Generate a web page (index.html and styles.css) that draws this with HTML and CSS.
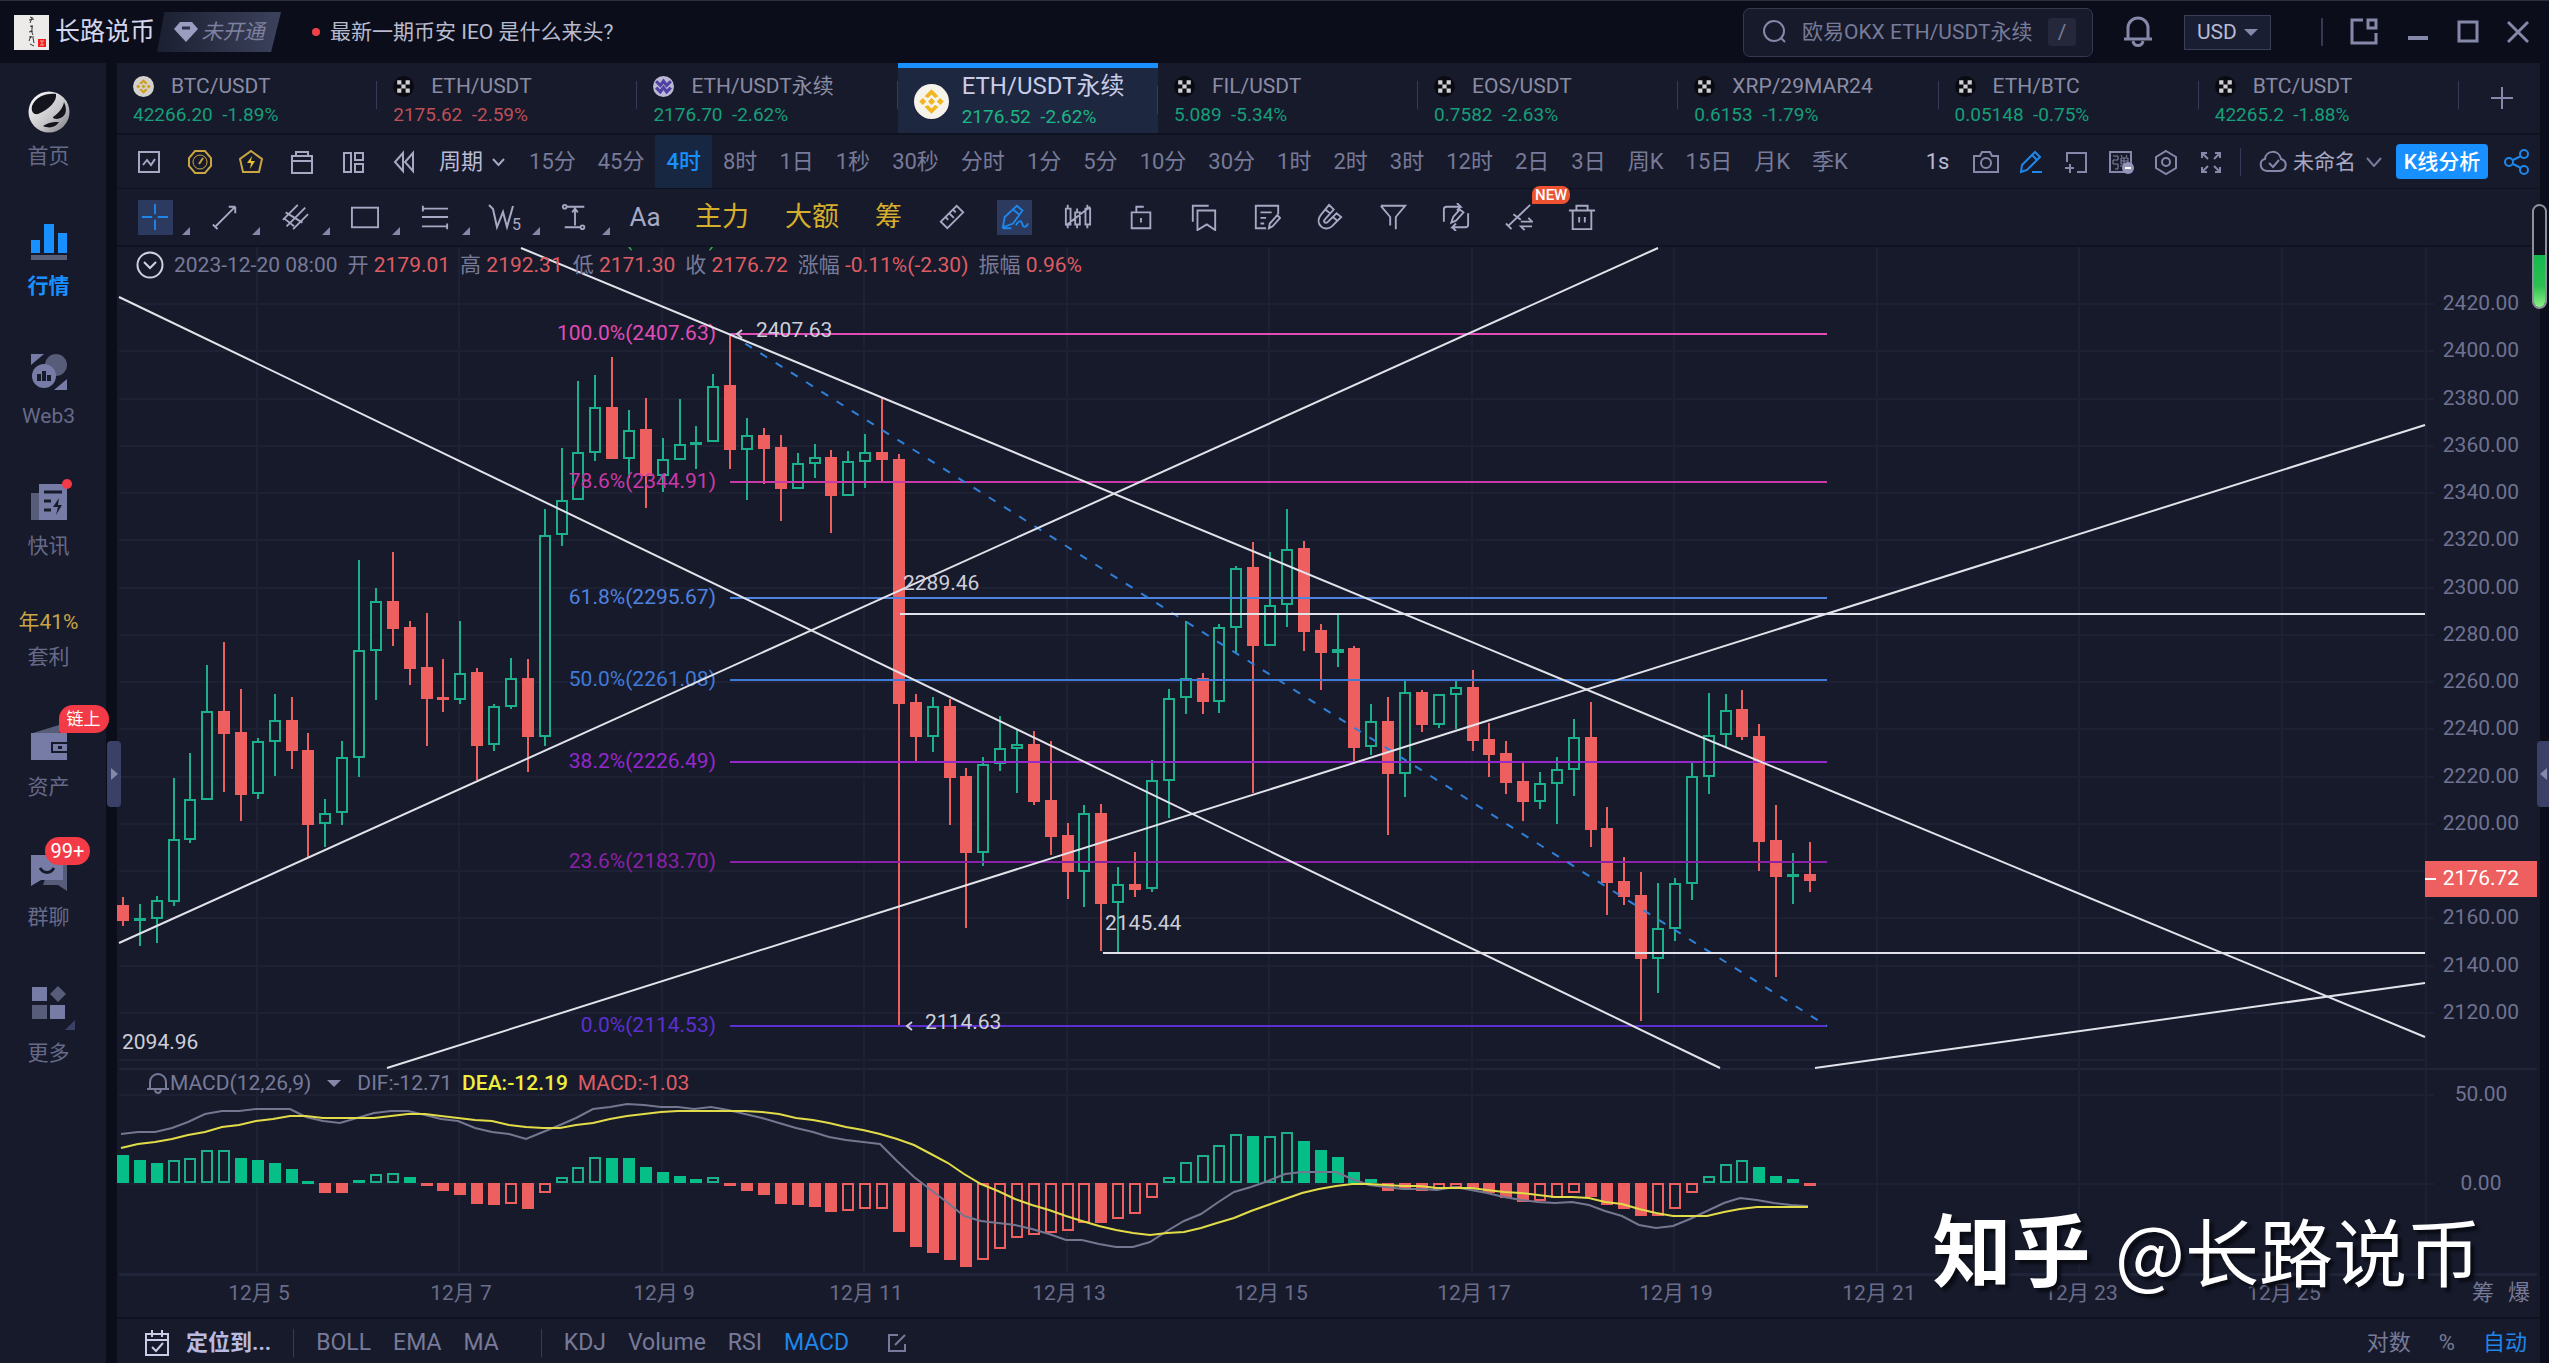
FILE: index.html
```html
<!DOCTYPE html>
<html lang="zh-CN">
<head>
<meta charset="utf-8">
<title>ETH/USDT永续</title>
<link rel="stylesheet" href="styles.css">
</head>
<body>
<header class="topbar">
  <svg class="avatar" viewBox="0 0 35 35" aria-hidden="true"><rect width="35" height="35" fill="#ecebea"/><path d="M16 2l3 1M15 5l5-1M18 3l-2 5M16 11l3 1M18 10v5M15 17l4-1M17 15l2 5M15 22h5M17 21l-2 5M19 23l1 5M16 29l4 2" stroke="#333" fill="none"/><rect x="24" y="24" width="8" height="8" fill="#ee2020"/><path d="M26 26h4M28 26v4M26 30h4" stroke="#f9a09a"/></svg>
  <strong class="username">长路说币</strong>
  <button class="vip"><svg width="24" height="22" viewBox="0 0 24 22"><path d="M6 1h12l6 7-12 13L0 8z" fill="#9a9dc0"/><path d="M8 7h8" stroke="#2b2f48" stroke-width="3"/></svg><span>未开通</span></button>
  <a class="news" href="#"><i class="dot"></i>最新一期币安 IEO 是什么来头?</a>
  <label class="search">
    <svg width="26" height="26" viewBox="0 0 26 26" fill="none" stroke="#8588a8" stroke-width="2"><circle cx="12" cy="12" r="10"/><path d="M19 19l4 4"/></svg>
    <input type="text" aria-label="搜索" value="欧易OKX ETH/USDT永续">
    <kbd>/</kbd>
  </label>
  <button class="bell" aria-label="通知"><svg width="30" height="32" viewBox="0 0 30 32" fill="none" stroke="#8588a8" stroke-width="3"><path d="M5 22V12a10 10 0 0 1 20 0v10M1 23h28M10 25c1 6 9 6 10 0"/></svg></button>
  <span class="currency"><select aria-label="货币"><option>USD</option></select></span>
  <span class="win-controls">
    <button aria-label="布局"><svg width="30" height="28" viewBox="0 0 30 28" fill="none" stroke="#8588a8" stroke-width="3"><path d="M14 2H3v23h24V15"/><rect x="19" y="2" width="8" height="8"/></svg></button>
    <button aria-label="最小化"><svg width="22" height="28" viewBox="0 0 22 28"><path d="M1 20h20" stroke="#8588a8" stroke-width="4"/></svg></button>
    <button aria-label="最大化"><svg width="22" height="28" viewBox="0 0 22 28"><rect x="2" y="4" width="18" height="19" fill="none" stroke="#8588a8" stroke-width="3"/></svg></button>
    <button aria-label="关闭"><svg width="22" height="28" viewBox="0 0 22 28"><path d="M1 4l20 20M21 4L1 24" stroke="#8588a8" stroke-width="3"/></svg></button>
  </span>
</header>

<div class="workspace">
  <nav class="sidebar">
    <a href="#" class="nav-item"><span class="nav-icon"><svg width="42" height="42" viewBox="0 0 42 42"><defs><linearGradient id="silver" x1="0" y1="0" x2="1" y2="1"><stop offset="0" stop-color="#fff"/><stop offset=".6" stop-color="#c4c4c8"/><stop offset="1" stop-color="#77777c"/></linearGradient></defs><circle cx="21" cy="21" r="20.500" fill="url(#silver)"/><path d="M4 15C8 6 17 2 28 3 29 10 22 18 10 23 5 24 3 20 4 15zM36 11c4 8 2 16-7 17-3 0-4-1-4-2 6-4 10-9 11-15zM15 35c6-4 11-4 16-4-3 5-9 7-16 4z" fill="#14141c"/></svg></span><span>首页</span></a>
    <a href="#" class="nav-item active"><span class="nav-icon"><svg width="36" height="38" viewBox="0 0 36 38"><path d="M0 17h9v13H0zM13 1h10v29H13zM27 10h9v20h-9z" fill="#1890ff"/><path d="M0 32h36v5H0z" fill="#5a6078"/></svg></span><span>行情</span></a>
    <a href="#" class="nav-item"><span class="nav-icon"><svg width="36" height="36" viewBox="0 0 36 36"><circle cx="25" cy="11" r="11" fill="#575c78"/><path d="M0 0h13L0 11zM36 36H23L36 25z" fill="#777ca6"/><circle cx="13" cy="22" r="12" fill="#777ca6"/><path d="M6 20h4v7H6zM11 17h4v10h-4zM16 21h4v6h-4z" fill="#171a2b"/></svg></span><span>Web3</span></a>
    <a href="#" class="nav-item"><span class="nav-icon"><svg class="spill" width="36" height="38" viewBox="0 0 36 38"><path d="M0 10h8v27H0z" fill="#575c78"/><path d="M8 1h28v36H8z" fill="#777ca6"/><path d="M13 9h18M13 18h7M13 27h7" stroke="#171a2b" stroke-width="3"/><path d="M28 15l-6 9h5l-2 8 6-10h-4z" fill="#171a2b"/><circle cx="36" cy="1" r="5" fill="#f23b46"/></svg></span><span>快讯</span></a>
    <a href="#" class="nav-item promo"><em>年41%</em><span>套利</span></a>
    <a href="#" class="nav-item"><span class="nav-icon"><svg width="36" height="36" viewBox="0 0 36 36"><path d="M2 8L28 0v8z" fill="#575c78"/><path d="M0 8h36v9H20v11h16v7H0z" fill="#777ca6"/><path d="M22 19h14v7H22z" fill="#777ca6"/><path d="M27 21h4v3h-4z" fill="#171a2b"/></svg><b class="badge chain">链上</b></span><span>资产</span></a>
    <a href="#" class="nav-item"><span class="nav-icon"><svg width="36" height="36" viewBox="0 0 36 36"><path d="M20 8h16v28l-9-6H12z" fill="#575c78"/><path d="M0 0h32v25H10L0 31z" fill="#777ca6"/><path d="M9 13c4 6 10 6 14 0" fill="none" stroke="#171a2b" stroke-width="3"/></svg><b class="badge count">99+</b></span><span>群聊</span></a>
    <a href="#" class="nav-item more"><span class="nav-icon"><svg width="34" height="34" viewBox="0 0 34 34"><path d="M0 1h15v14H0zM18 19h15v14H18z" fill="#777ca6"/><path d="M0 19h15v14H0zM26 0l8 8-8 8-8-8z" fill="#575c78"/></svg><i class="corner"></i></span><span>更多</span></a>
  </nav>

  <main class="panel">
    <div class="tabs">
      <button class="tab"><svg class="coin" viewBox="0 0 20 20"><use href="#bnb"/></svg><span class="pair">BTC/USDT</span><span class="quote up">42266.20&nbsp; -1.89%</span></button>
      <button class="tab"><svg class="coin" viewBox="0 0 20 20"><use href="#okx"/></svg><span class="pair">ETH/USDT</span><span class="quote down">2175.62&nbsp; -2.59%</span></button>
      <button class="tab"><svg class="coin" viewBox="0 0 20 20"><circle cx="10" cy="10" r="10" fill="#d8d4f4"/><path d="M3 5l4 4 3-4 3 4 4-4M3 11l4 4 3-4 3 4 4-4" fill="none" stroke="#5a48b8" stroke-width="3"/></svg><span class="pair">ETH/USDT永续</span><span class="quote up">2176.70&nbsp; -2.62%</span></button>
      <button class="tab current"><svg class="coin" viewBox="0 0 20 20"><use href="#bnb"/></svg><span class="pair">ETH/USDT永续</span><span class="quote up">2176.52&nbsp; -2.62%</span></button>
      <button class="tab"><svg class="coin" viewBox="0 0 20 20"><use href="#okx"/></svg><span class="pair">FIL/USDT</span><span class="quote up">5.089&nbsp; -5.34%</span></button>
      <button class="tab"><svg class="coin" viewBox="0 0 20 20"><use href="#okx"/></svg><span class="pair">EOS/USDT</span><span class="quote up">0.7582&nbsp; -2.63%</span></button>
      <button class="tab"><svg class="coin" viewBox="0 0 20 20"><use href="#okx"/></svg><span class="pair">XRP/29MAR24</span><span class="quote up">0.6153&nbsp; -1.79%</span></button>
      <button class="tab"><svg class="coin" viewBox="0 0 20 20"><use href="#okx"/></svg><span class="pair">ETH/BTC</span><span class="quote up">0.05148&nbsp; -0.75%</span></button>
      <button class="tab"><svg class="coin" viewBox="0 0 20 20"><use href="#okx"/></svg><span class="pair">BTC/USDT</span><span class="quote up">42265.2&nbsp; -1.88%</span></button>
      <button class="add-tab" aria-label="添加"><svg width="24" height="24" viewBox="0 0 24 24"><path d="M12 1v22M1 12h22" stroke="#8588a8" stroke-width="2"/></svg></button>
    </div>

    <div class="periods">
      <button class="ic" aria-label="图表"><svg viewBox="0 0 28 28"><rect x="4" y="4" width="20" height="20"/><path d="M8 17l4-5 4 5 4-6"/></svg></button>
      <button class="ic gold" aria-label="仪表"><svg viewBox="0 0 28 28"><path d="M9 3h10l6 7v8l-6 7H9l-6-7v-8z"/><circle cx="14" cy="14" r="7" stroke-width="1"/><path d="M13 16l4-6"/></svg></button>
      <button class="ic gold" aria-label="闪电"><svg viewBox="0 0 28 28"><path d="M14 3l11 8-3 13H6L3 11z"/><path d="M15 8l-5 7h4l-1 6 5-8h-4z" fill="#e8c02c" stroke="none"/></svg></button>
      <button class="ic" aria-label="仓位"><svg viewBox="0 0 28 28"><path d="M8 8V4h12v4M4 8h20v5H4zM4 13v12h20V13"/></svg></button>
      <button class="ic" aria-label="多图"><svg viewBox="0 0 28 28"><path d="M5 5h7v19H5zM16 5h8v7h-8zM16 16h8v8h-8z"/></svg></button>
      <button class="ic" aria-label="回放"><svg viewBox="0 0 28 28"><path d="M13 5v18L5 14zM23 5v18l-8-9z"/></svg></button>
      <button class="menu">周期<svg width="15" height="10" viewBox="0 0 15 10"><path d="M2 2l5.500 6L13 2"/></svg></button>
      <button class="p">15分</button><button class="p">45分</button><button class="p on">4时</button><button class="p">8时</button><button class="p">1日</button><button class="p">1秒</button><button class="p">30秒</button><button class="p">分时</button><button class="p">1分</button><button class="p">5分</button><button class="p">10分</button><button class="p">30分</button><button class="p">1时</button><button class="p">2时</button><button class="p">3时</button><button class="p">12时</button><button class="p">2日</button><button class="p">3日</button><button class="p">周K</button><button class="p">15日</button><button class="p">月K</button><button class="p">季K</button>
      <div class="actions">
        <button class="sec">1s</button>
        <button class="ic dim" aria-label="截图"><svg viewBox="0 0 28 28"><path d="M2 8h6l2-4h8l2 4h6v16H2z"/><circle cx="14" cy="15" r="5"/></svg></button>
        <button class="ic blue" aria-label="画笔"><svg viewBox="0 0 28 28"><path d="M4 24l1-7L18 4l5 5L10 22zM15 24h10M15 7l5 5"/></svg></button>
        <button class="ic dim" aria-label="添加指标"><svg viewBox="0 0 28 28"><path d="M5 14V5h19v19h-9M3 20h9M8 16v9"/></svg></button>
        <button class="ic dim" aria-label="弹幕"><svg viewBox="0 0 28 28"><rect x="3" y="4" width="21" height="20"/><path d="M6 8h5v4H6v4h5v5H8M14 7l1 2M20 7l-1 2M14 10h7v6h-7zM14 13h7M17 10v11M13 18h9" stroke-width="1"/><circle cx="21" cy="20" r="6" fill="#9396b8" stroke="none"/><path d="M18 20h6" stroke="#fff"/></svg></button>
        <button class="ic dim" aria-label="设置"><svg viewBox="0 0 28 28"><path d="M14 3l10 6v11l-10 6-10-6V9z"/><circle cx="14" cy="14" r="4"/></svg></button>
        <button class="ic dim" aria-label="全屏"><svg viewBox="0 0 28 28"><path d="M10 5H5v5M5 5l6 6M18 5h5v5M23 5l-6 6M10 24H5v-5M5 24l6-6M18 24h5v-5M23 24l-6-6"/></svg></button>
        <span class="vline"></span>
        <button class="layout"><svg width="28" height="24" viewBox="0 0 28 24"><path d="M8 21c-8-1-8-11-2-12C7 0 20-1 22 9c7 2 6 12-2 12zM10 13l4 4 6-7" stroke="#8588a8"/></svg>未命名<svg class="chev" width="16" height="10" viewBox="0 0 16 10"><path d="M1 1l7 8 7-8" stroke="#777a98"/></svg></button>
        <button class="analyse">K线分析</button>
        <button class="share" aria-label="分享"><svg width="28" height="28" viewBox="0 0 28 28"><circle cx="6" cy="14" r="4"/><circle cx="21" cy="6" r="4"/><circle cx="21" cy="22" r="4"/><path d="M10 12l8-4M10 16l8 4"/></svg></button>
      </div>
    </div>

    <div class="tools">
      <button class="tool sub" aria-label="十字"><span class="lit"><svg viewBox="0 0 30 30"><path d="M15 1v11M15 18v11M1 15h11M18 15h11"/></svg></span></button>
      <button class="tool sub" aria-label="线段"><svg viewBox="0 0 30 30"><path d="M4 26L25 5M19 4l7 0M26 4v7M2 23l5 5"/></svg></button>
      <button class="tool sub" aria-label="平行线"><svg viewBox="0 0 30 30"><path d="M2 18L18 2M6 25L26 5M13 28L29 12M5 10l18 11M4 17l10 8" /></svg></button>
      <button class="tool sub" aria-label="矩形"><svg viewBox="0 0 30 30"><rect x="1" y="5" width="28" height="21"/></svg></button>
      <button class="tool sub" aria-label="斐波那契"><svg viewBox="0 0 30 30"><path d="M1 6h28M1 15h28M1 25h28M2 3v6M28 22v6"/></svg></button>
      <button class="tool sub" aria-label="波浪"><svg class="wave" viewBox="0 0 34 30"><path d="M1 3l4 4 4 18 6-15 4 15 6-21" /><text x="24" y="28" class="five">5</text></svg></button>
      <button class="tool sub" aria-label="测量"><svg viewBox="0 0 30 30"><path d="M6 4h19M4 26h17M15 8v16M12 10l3-4 3 4"/><circle cx="4" cy="4" r="2"/><circle cx="23" cy="26" r="2"/></svg></button>
      <button class="tool aa">Aa</button>
      <button class="word">主力</button><button class="word">大额</button><button class="word">筹</button>
      <button class="tool slim" aria-label="尺子"><svg viewBox="0 0 30 30"><path d="M3 20L20 3l7 7L10 27zM8 15l3 3M12 11l5 5M16 7l3 3"/></svg></button>
      <button class="tool slim" aria-label="画线"><span class="lit"><svg viewBox="0 0 30 30"><path d="M2 26l2-11L17 3l6 5L13 22zM2 27h9M13 7l6 5M16 24c4-7 6-5 7-1s4 3 6-1"/></svg></span></button>
      <button class="tool slim" aria-label="K线"><svg viewBox="0 0 30 30"><path d="M2 6h5v17H2zM12 10h5v13h-5zM23 6h5v17h-5zM4 2v4M4 23v4M14 6v4M14 23v4M25 2v4M25 23v4M2 24L28 4"/></svg></button>
      <button class="tool slim" aria-label="锁"><svg viewBox="0 0 30 30"><path d="M5 10h20v17H5zM10 10V4h8M15 16v5"/></svg></button>
      <button class="tool slim" aria-label="书签"><svg viewBox="0 0 30 30"><path d="M8 8h19v21l-9-6-10 6zM3 20V3h17"/></svg></button>
      <button class="tool slim" aria-label="笔记"><svg viewBox="0 0 30 30"><path d="M27 12V3H3v24h11M8 10h12M8 16h6M8 22h4M17 27l1-5 8-9 3 3-8 9z"/></svg></button>
      <button class="tool slim" aria-label="磁铁"><svg viewBox="0 0 30 30"><path d="M14 2L5 13c-7 9 4 19 12 12l10-10-5-4-9 9c-3 3-6 0-3-3l9-10zM10 7l5 4M18 15l5 4"/></svg></button>
      <button class="tool slim" aria-label="筛选"><svg viewBox="0 0 30 30"><path d="M2 3h26L18 15v13M2 3l10 12v9"/></svg></button>
      <button class="tool slim" aria-label="同步"><svg viewBox="0 0 30 30"><path d="M2 20V7q0-3 3-3h15l-4-4M20 4l-4 4M28 11v12q0 3-3 3H11l4-4M11 26l4 4M10 21l2-6 7-8 4 3-8 9z"/></svg></button>
      <button class="tool slim" aria-label="对比"><svg viewBox="0 0 30 30"><path d="M3 25L27 2M1 22l6 6M9 12l8 6M17 20h12l-4-4M29 25H17l4 4"/></svg><b class="new">NEW</b></button>
      <button class="tool slim" aria-label="删除"><svg viewBox="0 0 30 30"><path d="M1 8h28M5 8v20h20V8M9 8V3h12v5M12 15v6M18 15v6"/></svg></button>
    </div>

    <section class="chart">
      <svg id="plot"></svg>
      <div class="legend ohlc">
        <button class="fold" aria-label="收起"><svg width="28" height="28" viewBox="0 0 28 28"><circle cx="14" cy="14" r="12.500"/><path d="M8 11l6 6 6-6"/></svg></button>
        <span>2023-12-20 08:00</span>
        <span>开 <b>2179.01</b></span><span>高 <b>2192.31</b></span><span>低 <b>2171.30</b></span><span>收 <b>2176.72</b></span><span>涨幅 <b>-0.11%(-2.30)</b></span><span>振幅 <b>0.96%</b></span>
      </div>
      <div class="legend macd">
        <span class="ind"><svg width="24" height="24" viewBox="0 0 24 24"><path d="M4 17V11a8 8 0 0 1 16 0v6M1 18h22M9 19c1 4 5 4 6 0"/></svg>MACD(12,26,9)</span><i class="tri"></i>
        <span>DIF:-12.71</span><span class="dea">DEA:-12.19</span><b>MACD:-1.03</b>
      </div>
      <div class="legend extra"><button>筹</button><button>爆</button></div>
    </section>

    <footer class="indicators">
      <button class="locate"><svg width="26" height="28" viewBox="0 0 26 28"><path d="M2 5h22v21H2zM2 11h22M8 1v7M18 1v7M8 18l4 4 7-8"/></svg><strong>定位到...</strong></button>
      <span class="vline"></span>
      <button>BOLL</button><button>EMA</button><button>MA</button>
      <span class="vline wide"></span>
      <button>KDJ</button><button>Volume</button><button>RSI</button><button class="on">MACD</button>
      <button class="edit" aria-label="编辑"><svg width="20" height="20" viewBox="0 0 20 20"><path d="M11 2H2v16h16v-7M8 12L18 2"/></svg></button>
      <span class="scale"><button>对数</button><button>%</button><button class="on">自动</button></span>
    </footer>
  </main>
  <button class="handle left" aria-label="展开左侧"></button>
  <button class="handle right" aria-label="展开右侧"></button>
  <div class="gauge"><i></i></div>
  <div class="watermark"><b>知乎</b> @长路说币</div>
</div>

<svg width="0" height="0" class="defs" aria-hidden="true">
  <symbol id="bnb" viewBox="0 0 20 20"><circle cx="10" cy="10" r="10" fill="#f6f3ea"/><path d="M10 3l4 4-2 1-2-2-2 2-2-1zM10 17l4-4-2-1-2 2-2-2-2 1zM3 10l2-2 2 2-2 2zM17 10l-2-2-2 2 2 2zM10 8l2 2-2 2-2-2z" fill="#f0b622"/></symbol>
  <symbol id="okx" viewBox="0 0 20 20"><circle cx="10" cy="10" r="10" fill="#08090e"/><path d="M4 4h4v4H4zM12 4h4v4h-4zM8 8h4v4H8zM4 12h4v4H4zM12 12h4v4h-4z" fill="#f0f0f0"/></symbol>
</svg>
<script src="chart.js"></script>
</body>
</html>
```
FILE: styles.css
```css
* { box-sizing: border-box; }
body {
  margin: 0;
  height: 100vh;
  display: flex;
  flex-direction: column;
  overflow: hidden;
  background: #0b0e1a;
  color: #777a98;
  font: 21px/28px Roboto, "Noto Sans CJK SC", sans-serif;
}
button, input, select { font: inherit; color: inherit; background: none; border: 0; padding: 0; margin: 0; }
button { cursor: pointer; display: flex; align-items: center; justify-content: center; white-space: nowrap; }
a { color: inherit; text-decoration: none; }
svg { flex: none; display: block; }
.defs { position: absolute; }

.topbar {
  height: 63px;
  flex: none;
  display: flex;
  align-items: center;
  padding: 0 20px 0 14px;
  border-top: 1px solid #2b3040;
}
.avatar { width: 35px; height: 35px; }
.username { margin-left: 6px; font-size: 25px; font-weight: 400; color: #d3d6ee; }
.vip {
  margin-left: 2px;
  width: 124px;
  height: 40px;
  gap: 4px;
  color: #7d819f;
  font-style: italic;
  background: linear-gradient(90deg, #1b1f31, #3c425c);
  clip-path: polygon(6% 0, 100% 0, 92% 100%, 0 100%);
}
.news { display: flex; align-items: center; gap: 10px; margin-left: 31px; color: #b9bbcf; }
.dot { width: 8px; height: 8px; border-radius: 50%; background: #f2404a; }
.search {
  margin-left: auto;
  width: 350px;
  height: 49px;
  display: flex;
  align-items: center;
  padding: 0 16px 0 18px;
  border: 1px solid #343950;
  border-radius: 7px;
  background: #171a2b;
}
.search input { flex: 1; min-width: 0; margin-left: 14px; color: #777a98; outline: 0; }
.search kbd { width: 28px; height: 28px; text-align: center; font: inherit; background: #24283a; border-radius: 3px; }
.bell { margin-left: 30px; }
.currency { position: relative; margin-left: 31px; }
.currency select {
  appearance: none;
  width: 87px;
  height: 35px;
  padding-left: 12px;
  border: 1px solid #3a3f58;
  background: #1a1e32;
  color: #b9bbd4;
}
.currency::after {
  content: "";
  position: absolute;
  right: 13px;
  top: 14px;
  border: 7px solid transparent;
  border-top-color: #8588a8;
  border-bottom: 0;
}
.win-controls { display: flex; gap: 28px; margin-left: 50px; padding-left: 26px; border-left: 2px solid #343950; }

.workspace { position: relative; flex: 1; min-height: 0; display: flex; }
.sidebar {
  width: 106px;
  flex: none;
  display: flex;
  flex-direction: column;
  gap: 50px;
  padding: 28px 9px 0 0;
  background: #171a2b;
}
.nav-item { display: flex; flex-direction: column; align-items: center; gap: 8px; line-height: 30px; color: #666a88; }
.nav-item.active { color: #1890ff; font-weight: 700; }
.nav-item.promo { gap: 5px; margin-top: -4px; }
.promo em { font-style: normal; color: #c9a544; }
.nav-item.more { gap: 14px; }
.nav-icon { position: relative; height: 42px; display: flex; align-items: center; }
.spill { overflow: visible; }
.badge {
  position: absolute;
  height: 28px;
  padding: 0 8px;
  border-radius: 14px;
  background: #f23b46;
  color: #fff;
  font-size: 17px;
  font-weight: 400;
  line-height: 28px;
  white-space: nowrap;
}
.badge.chain { left: 28px; top: -17px; border-radius: 14px 14px 14px 2px; }
.badge.count { left: 14px; top: -15px; font-size: 20px; padding: 0 6px; }
.corner { position: absolute; right: -9px; bottom: -6px; border: 5px solid #3a4066; border-left-color: transparent; border-top-color: transparent; }

.panel { flex: 1; min-width: 0; margin: 0 9px 0 11px; display: flex; flex-direction: column; background: #171a2b; }
.tabs { height: 72px; flex: none; display: flex; border-bottom: 2px solid #0f1220; }
.tab {
  position: relative;
  flex: 1;
  min-width: 0;
  display: grid;
  grid-template: 28px 26px / 38px 1fr;
  align-content: start;
  padding: 9px 0 0 16px;
  row-gap: 2px;
  text-align: left;
  justify-items: start;
  justify-content: stretch;
  color: #8a8ca4;
}
.tab::after { content: ""; position: absolute; right: 0; top: 18px; height: 28px; border-right: 1px solid #343a58; }
.coin { width: 21px; height: 21px; opacity: .85; }
.quote { grid-column: 1 / 3; font-size: 19px; }
.up { color: #159f7a; }
.down { color: #bd4f58; }
.tab.current { flex: 1 0 4px; height: 70px; background: #1e2740; border-top: 5px solid #1890ff; grid-template-columns: 48px 1fr; color: #c9cce6; padding-top: 4px; row-gap: 4px; }
.current .coin { grid-row: 1 / 3; align-self: center; width: 35px; height: 35px; opacity: 1; }
.current .pair { font-size: 24px; }
.current .quote { grid-column: 2; color: #1cb584; }
.add-tab { width: 81px; padding-left: 6px; }

.periods { height: 54px; flex: none; display: flex; align-items: stretch; padding-left: 6px; font-size: 22px; border-bottom: 1px solid #0f1220; }
.periods svg { fill: none; stroke: #a7a9c4; stroke-width: 2; }
.ic { width: 51px; }
.ic svg { width: 28px; height: 28px; }
.periods .gold svg { stroke: #c9a544; }
.periods .blue svg, .periods .share svg { stroke: #1f86ea; }
.periods .dim svg { stroke: #8588a8; }
.menu { padding: 0 12px 0 10px; gap: 8px; color: #b9bbd4; }
.p { padding: 0 11px; }
.p.on { background: #172742; color: #1890ff; font-weight: 500; }
.actions { display: flex; align-items: center; margin-left: auto; padding-right: 9px; }
.actions .ic { width: 45px; }
.sec { width: 51px; color: #b9bbd4; }
.vline { width: 1px; height: 28px; background: #343a58; margin: 0 18px 0 7px; }
.layout { gap: 6px; font-size: 21px; color: #a7a9c4; }
.chev { margin-left: 4px; }
.analyse { width: 92px; height: 35px; margin: 0 15px 0 14px; border-radius: 4px; background: #1890ff; color: #fff; font-size: 21px; font-weight: 500; }

.tools { height: 58px; flex: none; display: flex; align-items: stretch; padding-left: 3px; border-bottom: 2px solid #0f1220; }
.tool { position: relative; width: 70px; }
.tool svg { width: 28px; height: 28px; fill: none; stroke: #a7a9c4; stroke-width: 2; }
.tool .wave { width: 34px; height: 30px; }
.tool.slim { width: 63px; }
.tool.sub::after { content: ""; position: absolute; right: 0; bottom: 10px; border: 4px solid #8588a8; border-left-color: transparent; border-top-color: transparent; }
.five { font-size: 16px; fill: #a7a9c4; stroke: none; }
.lit { width: 35px; height: 35px; display: flex; align-items: center; justify-content: center; background: #2c3a60; }
.tool .lit svg { stroke: #1f86ea; }
.aa { font-size: 26px; color: #a7a9c4; }
.word { padding: 0 18px; font-size: 27px; color: #d6ae2c; }
.aa + .word { padding-left: 15px; }
.new { position: absolute; left: 45px; top: -3px; height: 18px; padding: 0 3px; border-radius: 8px 8px 8px 0; background: #ee5331; color: #fff; font-size: 15px; line-height: 18px; font-weight: 500; }

.chart { position: relative; flex: 1; min-height: 0; }
#plot { position: absolute; width: 100%; height: 100%; }
#plot text { dominant-baseline: central; }
.legend { position: absolute; display: flex; align-items: center; white-space: nowrap; }
.legend b { font-weight: 400; color: #df5c63; }
.legend svg { fill: none; stroke: #777a98; stroke-width: 2; }
.ohlc { left: 19px; top: 4px; gap: 10px; }
.legend .fold svg { stroke: #cfd1e2; }
.macd { left: 29px; bottom: 220px; gap: 10px; }
.ind { display: flex; align-items: center; }
.tri { margin: 0 6px; border: 7px solid transparent; border-top-color: #8588a8; border-bottom: 0; }
.legend .dea { color: #eeee3c; font-weight: 500; }
.extra { right: 10px; bottom: 10px; gap: 14px; font-size: 22px; }

.indicators { height: 46px; flex: none; display: flex; align-items: center; gap: 22px; padding: 3px 13px 0 27px; font-size: 23px; border-top: 2px solid #0f1220; }
.indicators svg { fill: none; stroke: #777a98; stroke-width: 2; }
.indicators .locate { gap: 16px; color: #b9bbe0; font-size: 22px; }
.locate svg { stroke: #c9cce6; }
.indicators .vline { margin: 0; }
.indicators .wide { margin: 0 0 0 20px; }
.indicators .on { color: #1f86ea; }
.edit { margin-left: 16px; }
.scale { display: flex; gap: 28px; margin-left: auto; font-size: 22px; }

.handle { position: absolute; top: 678px; width: 14px; height: 66px; border-radius: 4px; background: #3a4066; }
.handle::after { content: ""; border: 6px solid transparent; border-left: 7px solid #8588a8; border-right: 0; }
.handle.left { left: 107px; }
.handle.right { right: 0; width: 12px; border-radius: 4px 0 0 4px; }
.handle.right::after { border-left: 0; border-right: 7px solid #8588a8; }
.gauge { position: absolute; right: 2px; top: 141px; width: 15px; height: 105px; display: flex; align-items: flex-end; border: 2px solid #8e909c; border-radius: 8px; background: #10131f; overflow: hidden; }
.gauge i { width: 100%; height: 52px; background: linear-gradient(#14b850, #2cc050 60%, #8ef08a); }
.watermark { position: absolute; right: 68px; bottom: 66px; font-size: 74px; line-height: 96px; color: #fff; text-shadow: 4px 4px 3px #0a0c14; white-space: nowrap; font-family: "Noto Sans CJK SC", sans-serif; }
.watermark b { font-size: 79px; margin-right: 8px; }
```
FILE: chart.js
```js
// The drawing is laid out on a 2423 x 1070 grid and scaled to the space available.
const GRID_W = 2423, GRID_H = 1070, LEFT = 117, TOP = 247;
const STEP = 16.87, FIRST = 122.9, ZERO = 1183;
const GREEN = '#1cb08a', RED = '#ee6060', PLOT_RIGHT = 2425;

// One candle per entry: direction, high, body top, body bottom, low.
const candles = `r897 905 921 926|g904 918 921 946|g896 900 919 943|g778 839 902 906|g753 799 840 843|g665 711 800 800|r642 711 734 792|r689 732 795 821|g738 741 794 799|g694 720 742 776|r697 720 751 769|r733 750 825 857|g799 813 824 847|g741 757 813 825|g560 650 758 777|g588 601 651 700|r552 601 629 646|r621 627 669 685|r613 667 699 746|r659 697 700 712|g621 673 700 704|r668 672 746 780|g704 706 745 751|g658 678 707 709|r659 678 737 772|g509 535 737 746|g448 500 535 546|g381 452 500 500|g375 407 453 461|r357 407 459 459|g410 430 459 478|r398 429 476 508|g438 459 476 492|g399 444 460 460|g426 442 444 469|g374 386 442 442|r335 385 450 469|g418 435 450 500|r428 435 449 484|r435 447 489 521|g453 463 489 489|g444 457 464 478|r450 457 496 533|g451 461 496 496|g434 452 462 488|r398 452 460 482|r454 459 704 1025|r694 702 737 763|g697 706 737 752|r699 706 778 825|r768 776 853 928|g757 764 853 866|g716 748 764 771|g729 744 749 793|r731 744 802 805|r741 800 837 855|r823 835 872 899|g805 813 872 907|r804 813 904 951|g867 884 903 953|r852 884 890 897|g760 780 889 892|g689 698 781 818|g621 678 698 714|r673 678 702 714|g624 627 702 713|g566 568 628 653|r542 567 646 793|g552 605 646 646|g509 549 605 627|r541 548 632 651|r624 630 653 690|g614 649 653 667|r646 648 748 762|g704 721 747 755|r697 721 774 835|g681 692 774 797|r690 692 725 732|g694 694 725 728|g681 687 695 729|r670 687 741 751|r723 739 755 777|r741 753 783 794|r763 781 802 821|g772 783 802 809|g757 769 784 824|g719 737 770 796|r702 737 830 847|r807 828 883 915|r857 881 897 905|r872 895 959 1021|g883 928 959 993|g878 883 929 941|g761 776 884 900|g693 735 777 794|g694 710 735 747|r690 709 737 740|r724 736 842 871|r805 840 877 977|g853 874 876 904|r842 874 881 892`.split('|');

// Histogram heights; an "h" marks a hollow bar.
const hist = '28 23 20 23h 25h 33h 33h 25 23 20 14 2 -10 -10 3 9h 10h 6 -3 -8 -12 -21 -22 -21h -26 -10h 6h 16h 26h 25 25 16 11 7 4 6h -3 -8 -12 -21 -22 -24 -29 -28h -26h -26h -49 -64 -70 -77 -84 -77h -66h -55h -52h -50h -48h -40h -40 -36h -31h -15h 6h 21h 28h 38h 49h 47 47h 51h 42 33 26 11 4 -8 -6 -8 -6h -5h -6 -10 -15 -19 -18h -15h -10h -14 -22 -26 -33 -33h -26h -10h 7h 19h 23h 16 7 4 -3'.split(' ');

// Indicator curves, in thirds of a grid unit below y = 1060.
const dif = [222,216,216,204,187,163,153,153,147,147,147,170,183,188,174,158,153,153,166,177,183,204,215,221,236,215,195,174,147,142,131,136,141,141,147,142,151,161,173,188,204,215,230,241,247,251,303,350,390,430,468,483,489,494,508,523,541,541,551,562,562,546,512,483,461,428,395,382,362,341,336,336,336,358,374,380,387,387,389,382,390,398,410,420,426,430,425,436,452,467,494,504,498,478,452,430,414,419,430,435,439];
const dea = [265,252,247,236,225,215,200,195,184,178,168,169,174,174,174,174,168,163,163,168,174,179,184,195,200,205,205,195,188,178,168,163,157,152,152,152,152,152,157,163,174,179,190,200,210,221,237,256,283,308,341,373,392,418,435,451,467,484,498,510,520,524,520,515,505,489,473,452,436,416,398,388,377,373,373,374,378,379,383,384,385,390,395,400,405,410,410,415,426,431,447,458,467,467,467,457,447,441,440,440,440];

const trends = [[119,297,1720,1068],[521,248,2425,1037],[119,943,1658,248],[387,1068,2425,425],[1815,1068,2425,983],[900,614,2425,614],[1103,953,2425,953]];
const fibs = [['113.6%(2447.49)',240,'#2fae3f'],['100.0%(2407.63)',334,'#e04cb8'],['78.6%(2344.91)',482,'#c93aa8'],['61.8%(2295.67)',598,'#4f83e0'],['50.0%(2261.08)',680,'#3f7ad8'],['38.2%(2226.49)',762,'#9528cc'],['23.6%(2183.70)',862,'#8a22a8'],['0.0%(2114.53)',1026,'#5c30d0']];

const plot = document.getElementById('plot');

function draw() {
  const box = plot.getBoundingClientRect();
  const kx = box.width / GRID_W, ky = box.height / GRID_H;
  const X = v => Math.round((v - LEFT) * kx), Y = v => Math.round((v - TOP) * ky);
  const out = [];
  const line = (x1, y1, x2, y2, c, w = 1, extra = '') =>
    out.push(`<line x1="${X(x1)}" y1="${Y(y1)}" x2="${X(x2)}" y2="${Y(y2)}" stroke="${c}" stroke-width="${w}" ${extra}/>`);
  const crisp = 'shape-rendering="crispEdges"';
  const text = (s, x, y, c, anchor = 'start') =>
    out.push(`<text x="${X(x)}" y="${Y(y - 1)}" fill="${c}" text-anchor="${anchor}">${s}</text>`);
  const bar = (cx, top, bottom, width, hollow, c) => {
    const w = Math.round(width * kx), x = X(cx) - Math.round(w / 2), y = Y(top), h = Math.max(3, Y(bottom) - y);
    out.push(hollow && h > 4
      ? `<rect x="${x + 1}" y="${y + 1}" width="${w - 2}" height="${h - 2}" fill="#171a2b" stroke="${c}" stroke-width="2"/>`
      : `<rect x="${x}" y="${y}" width="${w}" height="${h}" fill="${c}"/>`);
  };
  const grid = '#1d2133';

  for (let k = 0; k < 17; k++) line(119, 304 + k * 47.26, k < 16 ? 2434 : PLOT_RIGHT, 304 + k * 47.26, grid, 2, crisp);
  line(119, 1095, 2434, 1095, grid, 2, crisp);
  line(119, 1184, 2434, 1184, grid, 2, crisp);
  line(119, 1069, 2537, 1069, '#212538', 2, crisp);
  line(119, 1274, 2537, 1274, '#202439', 3, crisp);
  for (let d = 0; d < 11; d++) {
    const x = 256.5 + d * 202.5;
    line(x, 247, x, 1272, grid, 2, crisp);
    text('12月 ' + (5 + d * 2), x + 2, 1294, '#6a6d8a', 'middle');
  }
  line(2426, 247, 2426, 1272, grid, 2, crisp);

  candles.forEach((row, i) => {
    const [high, top, bottom, low] = row.slice(1).split(' ').map(Number);
    const x = FIRST + i * STEP, up = row[0] === 'g', c = up ? GREEN : RED;
    line(x, high, x, low, c, 2, crisp);
    bar(x, top, bottom, 12, up, c);
  });

  hist.forEach((item, i) => {
    const v = parseInt(item, 10), hollow = item.endsWith('h');
    bar(FIRST + i * STEP, ZERO - Math.max(v, 0), ZERO - Math.min(v, 0), 12, hollow, v > 0 ? (hollow ? GREEN : '#06bf88') : RED);
  });

  [[dif, '#74778f'], [dea, '#e2dc48']].forEach(([curve, c]) => {
    const pts = curve.map((v, i) => X(FIRST - 2 + i * STEP) + ',' + Y(1060 + v / 3)).join(' ');
    out.push(`<polyline points="${pts}" fill="none" stroke="${c}" stroke-width="2"/>`);
  });

  fibs.forEach(([label, y, c]) => {
    text(label, 716, y, c, 'end');
    if (y > TOP) line(730, y, 1827, y, c, 2, crisp);
  });
  line(730, 334, 1827, 1026, '#2f80d8', 2, 'stroke-dasharray="8 10"');
  trends.forEach(t => line(...t, '#e2e3ea', 2));

  const note = '#cdced8';
  text('2407.63', 756, 331, note);
  text('2289.46', 903, 584, note);
  text('2145.44', 1105, 924, note);
  text('2114.63', 925, 1023, note);
  text('2094.96', 122, 1043, note);
  [[737, 334], [907, 1026]].forEach(([x, y]) =>
    out.push(`<path d="M${X(x) + 5} ${Y(y) - 4}l-5 4 5 4" fill="none" stroke="${note}" stroke-width="2"/>`));

  for (let k = 0; k < 16; k++) {
    if (k !== 12) text((2420 - k * 20).toFixed(2), 2481, 304 + k * 47.26, '#6f7290', 'middle');
  }
  text('50.00', 2481, 1095, '#6f7290', 'middle');
  text('0.00', 2481, 1184, '#6f7290', 'middle');
  out.push(`<rect x="${X(2425)}" y="${Y(879) - 18}" width="${X(2537) - X(2425)}" height="36" fill="${RED}"/>`);
  line(2425, 879, 2436, 879, '#fff', 2);
  text('2176.72', 2481, 879, '#fff', 'middle');
  plot.innerHTML = out.join('');
}

draw();
window.addEventListener('resize', draw);
```
